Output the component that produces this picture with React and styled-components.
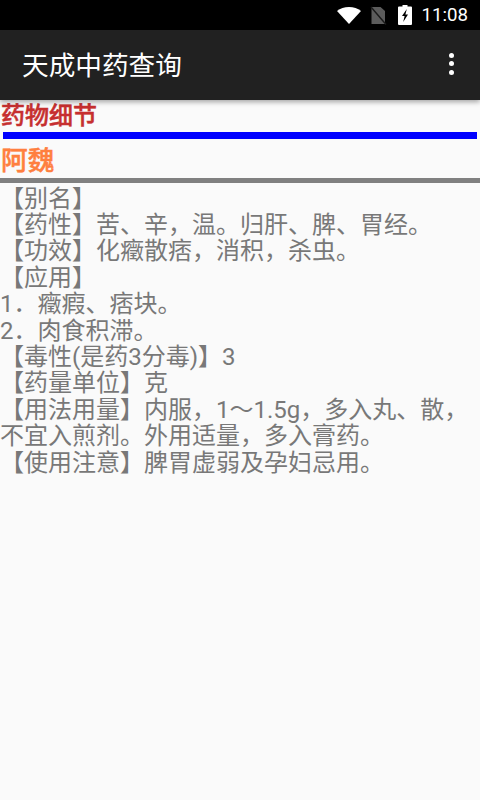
import React from 'react'
import styled, { createGlobalStyle } from 'styled-components'

const GlobalStyle = createGlobalStyle`
  html, body { margin: 0; padding: 0; background: #fafafa; }
  body { font-family: "Roboto", "Noto Sans CJK SC", sans-serif; }
`

const lines = [
  '【别名】',
  '【药性】苦、辛，温。归肝、脾、胃经。',
  '【功效】化癥散痞，消积，杀虫。',
  '【应用】',
  '1．癥瘕、痞块。',
  '2．肉食积滞。',
  '【毒性(是药3分毒)】3',
  '【药量单位】克',
  '【用法用量】内服，1～1.5g，多入丸、散，不宜入煎剂。外用适量，多入膏药。',
  '【使用注意】脾胃虚弱及孕妇忌用。',
]

export default function App() {
  return (
    <Screen>
      <GlobalStyle />
      <StatusBar>
        <svg width="24" height="17" viewBox="0 0 24 17">
          <path d="M12 17L0 3.900C3.300 1.400 7.400 0 12 0s8.700 1.400 12 3.900z" fill="#fff" />
        </svg>
        <SimIcon width="17" height="19" viewBox="0 0 17 19">
          <path d="M1.500 1h9l4.500 4v13h-13.500z" fill="#5c5c5c" />
          <path d="M1 1l15 17.500" stroke="#1a1a1a" strokeWidth="1.400" />
        </SimIcon>
        <BatteryIcon width="14" height="20" viewBox="0 0 14 20">
          <path d="M4.500 0h5v1.500H13a1 1 0 0 1 1 1V19a1 1 0 0 1-1 1H1a1 1 0 0 1-1-1V2.500a1 1 0 0 1 1-1h3.500z" fill="#fff" />
          <path d="M8.800 4L4 11h2.600l-1.400 6L10 9.500H7.400z" fill="#000" />
        </BatteryIcon>
        <Clock>11:08</Clock>
      </StatusBar>
      <AppBar>
        <Title>天成中药查询</Title>
        <MoreButton>
          <Dot />
          <Dot />
          <Dot />
        </MoreButton>
      </AppBar>
      <Content>
        <SectionTitle>药物细节</SectionTitle>
        <BlueRule />
        <DrugName>阿魏</DrugName>
        <GrayRule />
        <Details>
          {lines.map((line) => (
            <Line key={line}>{line}</Line>
          ))}
        </Details>
      </Content>
    </Screen>
  )
}

const Screen = styled.div`
  width: 480px;
  height: 800px;
  overflow: hidden;
  background: #fafafa;
`
const StatusBar = styled.div`
  height: 30px;
  background: #000;
  display: flex;
  align-items: center;
  justify-content: flex-end;
  padding-right: 12px;
  box-sizing: border-box;
`
const SimIcon = styled.svg`
  margin-left: 9px;
`
const BatteryIcon = styled.svg`
  margin-left: 11px;
`
const Clock = styled.span`
  margin-left: 10px;
  color: #fff;
  font-size: 18.67px;
  font-family: "Roboto", sans-serif;
`
const AppBar = styled.div`
  position: relative;
  height: 70px;
  box-sizing: border-box;
  background: #212121;
  display: flex;
  align-items: center;
  justify-content: space-between;
  padding: 0 26px 3px 22px;
  box-shadow: 0 2px 5px rgba(0, 0, 0, 0.35);
`
const Title = styled.h1`
  margin: 0;
  color: #fff;
  font-size: 26.67px;
  font-weight: 400;
`
const MoreButton = styled.div`
  display: flex;
  flex-direction: column;
  gap: 3.500px;
`
const Dot = styled.span`
  width: 5px;
  height: 5px;
  border-radius: 50%;
  background: #fff;
`
const Content = styled.main`
  display: flex;
  flex-direction: column;
`
const SectionTitle = styled.div`
  color: #c62f2f;
  font-size: 24px;
  font-weight: 500;
  -webkit-text-stroke: 0.5px #c62f2f;
  line-height: 32px;
  margin-left: 1px;
`
const BlueRule = styled.div`
  height: 6.500px;
  margin: 0 3px;
  background: #0000ff;
`
const DrugName = styled.div`
  color: #ff7f3f;
  font-size: 26.67px;
  font-weight: 500;
  -webkit-text-stroke: 0.5px #ff7f3f;
  line-height: 33px;
  padding-top: 6.500px;
  margin-left: 1px;
`
const GrayRule = styled.div`
  height: 5px;
  background: #808080;
`
const Details = styled.div`
  padding-top: 2.500px;
  color: #787878;
  font-size: 24px;
`
const Line = styled.div`
  line-height: 26.4px;
`
